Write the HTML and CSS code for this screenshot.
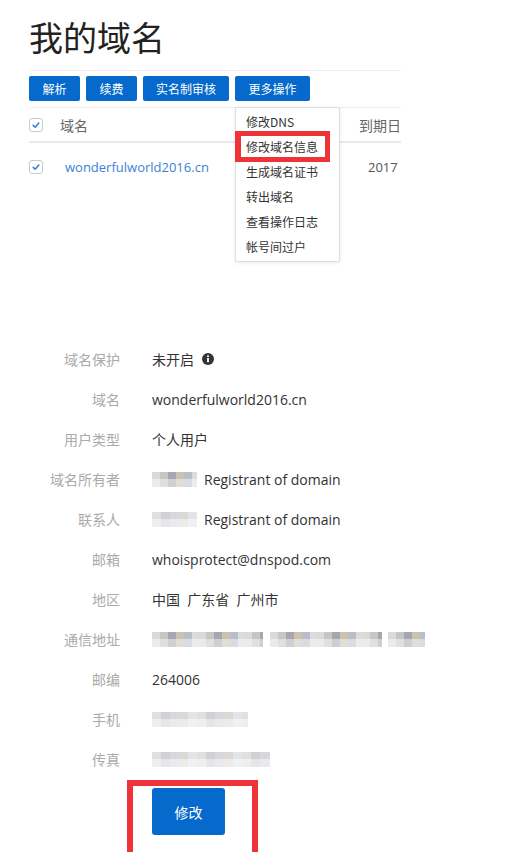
FILE: index.html
```html
<!DOCTYPE html>
<html lang="zh-CN">
<head>
<meta charset="utf-8">
<title>我的域名</title>
<link rel="stylesheet" href="styles.css">
</head>
<body>
<div class="page">
  <h1 class="title">我的域名</h1>
  <div class="toolbar">
    <button class="btn w51">解析</button>
    <button class="btn w51">续费</button>
    <button class="btn w86">实名制审核</button>
    <div class="more">
      <button class="btn w75">更多操作</button>
      <div class="dropdown">
        <div class="item">修改DNS</div>
        <div class="item">修改域名信息</div>
        <div class="item">生成域名证书</div>
        <div class="item">转出域名</div>
        <div class="item">查看操作日志</div>
        <div class="item">帐号间过户</div>
        <div class="highlight"></div>
      </div>
    </div>
  </div>
  <div class="table">
    <div class="row head">
      <div class="c1"><span class="check"><svg viewBox="0 0 14 14" width="14" height="14"><path d="M4.2 7.3 L6.2 9.2 L9.8 5" fill="none" stroke="#3b82d6" stroke-width="1.6" stroke-linecap="round" stroke-linejoin="round"/></svg></span></div>
      <div class="c2">域名</div>
      <div class="c3">到期日</div>
    </div>
    <div class="row data">
      <div class="c1"><span class="check"><svg viewBox="0 0 14 14" width="14" height="14"><path d="M4.2 7.3 L6.2 9.2 L9.8 5" fill="none" stroke="#3b82d6" stroke-width="1.6" stroke-linecap="round" stroke-linejoin="round"/></svg></span></div>
      <div class="c2 link">wonderfulworld2016.cn</div>
      <div class="c3 date">2017</div>
    </div>
  </div>
</div>

<div class="form">
  <div class="frow"><div class="lab">域名保护</div><div class="val">未开启<span class="info"><svg viewBox="0 0 12 12" width="12" height="12"><circle cx="6" cy="6" r="6" fill="#333"/><rect x="5.1" y="5" width="1.8" height="4.2" fill="#fff"/><circle cx="6" cy="3.3" r="1" fill="#fff"/></svg></span></div></div>
  <div class="frow"><div class="lab">域名</div><div class="val">wonderfulworld2016.cn</div></div>
  <div class="frow"><div class="lab">用户类型</div><div class="val">个人用户</div></div>
  <div class="frow"><div class="lab">域名所有者</div><div class="val"><span class="blur b-name"></span>Registrant of domain</div></div>
  <div class="frow"><div class="lab">联系人</div><div class="val"><span class="blur b-name light"></span>Registrant of domain</div></div>
  <div class="frow"><div class="lab">邮箱</div><div class="val">whoisprotect@dnspod.com</div></div>
  <div class="frow"><div class="lab">地区</div><div class="val">中国&nbsp;&nbsp;广东省&nbsp;&nbsp;广州市</div></div>
  <div class="frow"><div class="lab">通信地址</div><div class="val"><span class="blur b-a1"></span><span class="blur b-a2"></span><span class="blur b-a3"></span></div></div>
  <div class="frow"><div class="lab">邮编</div><div class="val">264006</div></div>
  <div class="frow"><div class="lab">手机</div><div class="val"><span class="blur b-phone light"></span></div></div>
  <div class="frow"><div class="lab">传真</div><div class="val"><span class="blur b-fax light"></span></div></div>
  <div class="submit-box">
    <button class="btn-submit">修改</button>
  </div>
</div>
</body>
</html>
```

FILE: styles.css
```css
* { box-sizing: border-box; }
html, body { margin: 0; padding: 0; background: #fff; }
body {
  font-family: "Open Sans", "Noto Sans CJK SC", sans-serif;
  color: #333;
  width: 506px;
  height: 852px;
  overflow: hidden;
}
.page {
  width: 372px;
  margin-left: 29px;
  padding-top: 17px;
}
.title {
  margin: 0;
  font-family: "Noto Sans CJK SC", sans-serif;
  font-size: 34px;
  line-height: 40px;
  font-weight: 400;
  color: #222;
}
.toolbar {
  margin-top: 13px;
  border-top: 1px solid #eeeeee;
  padding: 5px 0 6px;
  display: flex;
  gap: 6px;
}
.btn {
  height: 25px;
  border: 0;
  border-radius: 2px;
  background: #0669cc;
  color: #fff;
  font-family: "Noto Sans CJK SC", sans-serif;
  font-size: 12px;
  line-height: 25px;
  padding: 0;
  display: block;
}
.w51 { width: 51px; }
.w86 { width: 86px; }
.w75 { width: 75px; }
.more { position: relative; }
.dropdown {
  position: absolute;
  left: 0;
  top: 31px;
  width: 105px;
  background: #fff;
  border: 1px solid #dddddd;
  border-radius: 2px;
  box-shadow: 0 1px 4px rgba(0,0,0,0.08);
  padding: 1px 0 2px;
  z-index: 5;
}
.item {
  height: 25px;
  line-height: 25px;
  padding-left: 10px;
  font-family: "Noto Sans CJK SC", sans-serif;
  font-size: 12px;
  color: #333;
  white-space: nowrap;
}
.highlight {
  position: absolute;
  left: -1px;
  top: 23px;
  width: 95px;
  height: 31px;
  border: 5px solid #ee3339;
  border-left-width: 6px;
}
.table {
  border-top: 1px solid #eeeeee;
}
.row {
  display: grid;
  grid-template-columns: 31px 299px 42px;
  align-items: center;
}
.row.head {
  height: 35px;
  border-bottom: 2px solid #e8e8ec;
  font-family: "Noto Sans CJK SC", sans-serif;
  font-size: 14px;
  color: #666;
}
.row.data {
  height: 48px;
}
.c1 { display: flex; align-items: center; }
.check {
  width: 14px;
  height: 14px;
  border: 1px solid #c9c9cf;
  border-radius: 3px;
  display: block;
  position: relative;
}
.check svg { position: absolute; left: -1px; top: -1px; }
.c3 { white-space: nowrap; }
.link {
  padding-left: 5px;
  color: #3b82d6;
  font-size: 13px;
}
.date {
  padding-left: 9px;
  font-size: 13px;
  color: #555;
}
.form {
  margin-top: 148px;
}
.frow {
  display: flex;
  align-items: center;
  height: 40px;
  font-size: 14px;
}
.lab {
  width: 120px;
  text-align: right;
  color: #aaaaaa;
  font-family: "Noto Sans CJK SC", sans-serif;
  flex: none;
}
.val {
  margin-left: 32px;
  color: #333;
  display: flex;
  align-items: center;
  white-space: nowrap;
}
.info { display: inline-flex; margin-left: 8px; }
.blur {
  display: inline-block;
  height: 15px;
  filter: blur(0.6px);
  background:
    linear-gradient(to bottom, rgba(255,255,255,0) 50%, rgba(255,255,255,0.45) 50%),
    repeating-linear-gradient(90deg, #d9dad9 0 8px, #c4c7c4 8px 16px, #a8a6b0 16px 24px, #cbc2b2 24px 32px, #b9bfc9 32px 40px, #dcdcdc 40px 46px);
}
.blur.light {
  background:
    linear-gradient(to bottom, rgba(255,255,255,0.35) 50%, rgba(255,255,255,0.65) 50%),
    repeating-linear-gradient(90deg, #d0d0d0 0 9px, #b8b8bf 9px 18px, #c4c2c8 18px 27px, #c9c5bd 27px 36px, #d4d6dc 36px 45px);
}
.b-name { width: 45px; margin-right: 7px; }
.b-a1 { width: 111px; margin-right: 7px; }
.b-a2 { width: 112px; margin-right: 6px; }
.b-a3 { width: 37px; }
.b-phone { width: 96px; }
.b-fax { width: 118px; }
.submit-box {
  margin-top: 1px;
  margin-left: 127px;
  width: 131px;
  height: 90px;
  border: 6px solid #ee3339;
  border-bottom: 0;
  padding: 2px 0 0 19px;
}
.btn-submit {
  width: 73px;
  height: 47px;
  border: 0;
  border-radius: 3px;
  background: #0669cc;
  color: #fff;
  font-family: "Noto Sans CJK SC", sans-serif;
  font-size: 14px;
  padding: 0;
  display: block;
}
```
